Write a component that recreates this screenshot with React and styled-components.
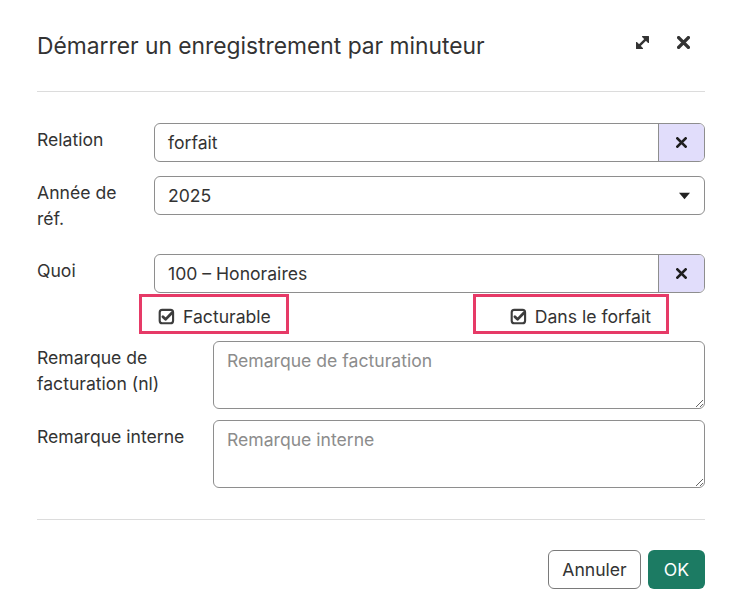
import React from 'react';
import styled, { createGlobalStyle } from 'styled-components';

const GlobalStyle = createGlobalStyle`
  body {
    margin: 0;
    background: #FFFFFF;
    font-family: Inter, "Noto Sans", sans-serif;
    color: #333333;
  }
`

const ExpandIcon = () => (
  <svg width="17" height="17" viewBox="0 0 16 16">
    <path d="M4.8 11.2 L11.2 4.8" stroke="#333" strokeWidth="2.3" strokeLinecap="round" />
    <path d="M8 2.4 H13.6 V8 Z" fill="#333" stroke="#333" strokeWidth="1" strokeLinejoin="round" />
    <path d="M2.4 8 V13.6 H8 Z" fill="#333" stroke="#333" strokeWidth="1" strokeLinejoin="round" />
  </svg>
);

const CrossIcon = ({ size = 13, weight = 3.2, color = '#333' }) => (
  <svg width={size} height={size} viewBox="0 0 12 12">
    <path d="M1.5 1.5 L10.5 10.5 M10.5 1.5 L1.5 10.5" stroke={color} strokeWidth={weight} strokeLinecap="round" />
  </svg>
);

const CheckSquare = () => (
  <svg width="17" height="17" viewBox="0 0 16 16">
    <rect x="1.6" y="1.8" width="12.6" height="12.6" rx="2.4" fill="none" stroke="#3d3d3d" strokeWidth="2" />
    <path d="M4.6 8.3 L7.1 10.7 L13.2 4.4" fill="none" stroke="#3d3d3d" strokeWidth="2.6" strokeLinecap="round" strokeLinejoin="round" />
  </svg>
);

const Caret = () => (
  <svg width="13" height="8" viewBox="0 0 12 8">
    <path d="M0.5 0.8 H11.5 L6 7.2 Z" fill="#222" />
  </svg>
);

class App extends React.Component {
  render() {
    return (
      <Dialog>
        <GlobalStyle />
        <Header>
          <Title>Démarrer un enregistrement par minuteur</Title>
          <Actions>
            <IconButton><ExpandIcon /></IconButton>
            <IconButton><CrossIcon /></IconButton>
          </Actions>
        </Header>
        <Body>
          <FieldRow labelWidth={117}>
            <Label>Relation</Label>
            <InputGroup>
              <Value>forfait</Value>
              <ClearButton><CrossIcon size={11} weight={3} color="#1f1f1f" /></ClearButton>
            </InputGroup>
          </FieldRow>
          <FieldRow labelWidth={117} top={14}>
            <Label>Année de réf.</Label>
            <InputGroup>
              <Value>2025</Value>
              <CaretBox><Caret /></CaretBox>
            </InputGroup>
          </FieldRow>
          <FieldRow labelWidth={117} top={14}>
            <Label>Quoi</Label>
            <InputGroup>
              <Value>100 – Honoraires</Value>
              <ClearButton><CrossIcon size={11} weight={3} color="#1f1f1f" /></ClearButton>
            </InputGroup>
          </FieldRow>
          <CheckRow>
            <Highlight padLeft={16}>
              <CheckSquare />
              <span>Facturable</span>
            </Highlight>
            <Highlight padLeft={34}>
              <CheckSquare />
              <span>Dans le forfait</span>
            </Highlight>
          </CheckRow>
          <FieldRow labelWidth={176} top={7}>
            <Label>Remarque de facturation (nl)</Label>
            <TextArea placeholder="Remarque de facturation" />
          </FieldRow>
          <FieldRow labelWidth={176} top={11}>
            <Label>Remarque interne</Label>
            <TextArea placeholder="Remarque interne" />
          </FieldRow>
        </Body>
        <Footer>
          <CancelButton>Annuler</CancelButton>
          <OkButton>OK</OkButton>
        </Footer>
      </Dialog>
    );
  }
}

const Dialog = styled.div`
  width: 742px;
  height: 605px;
  box-sizing: border-box;
  padding: 0 37px;
  background: #FFFFFF;
  display: flex;
  flex-direction: column;
`

const Header = styled.div`
  height: 92px;
  box-sizing: border-box;
  display: flex;
  align-items: center;
  justify-content: space-between;
  border-bottom: 1px solid #dcdcdc;
`

const Title = styled.h1`
  margin: 0;
  font-size: 22.8px;
  font-weight: 400;
  color: #333333;
`

const Actions = styled.div`
  display: flex;
  gap: 13px;
  margin-right: 8px;
  margin-top: -6px;
`

const IconButton = styled.button`
  width: 28px;
  height: 28px;
  padding: 0;
  border: none;
  background: transparent;
  display: flex;
  align-items: center;
  justify-content: center;
`

const Body = styled.div`
  padding: 31px 0 31px;
  border-bottom: 1px solid #dcdcdc;
`

const FieldRow = styled.div`
  display: grid;
  grid-template-columns: ${p => p.labelWidth}px 1fr;
  margin-top: ${p => p.top || 0}px;
  align-items: start;
`

const Label = styled.label`
  font-size: 17.6px;
  line-height: 26px;
  padding: 4px 8px 8px 0;
  color: #333333;
`

const InputGroup = styled.div`
  height: 39px;
  box-sizing: border-box;
  border: 1px solid #8e8e8e;
  border-radius: 6px;
  display: flex;
  align-items: stretch;
  overflow: hidden;
`

const Value = styled.div`
  flex: 1;
  display: flex;
  align-items: center;
  padding: 0 13px;
  font-size: 17.6px;
  color: #333333;
`

const ClearButton = styled.div`
  width: 45px;
  border-left: 1px solid #8e8e8e;
  background: #e1ddfb;
  display: flex;
  align-items: center;
  justify-content: center;
`

const CaretBox = styled.div`
  width: 40px;
  display: flex;
  align-items: center;
  justify-content: center;
`

const CheckRow = styled.div`
  display: flex;
  justify-content: space-between;
  padding: 0 36px 0 102px;
  margin-top: 1px;
`

const Highlight = styled.div`
  height: 40px;
  box-sizing: border-box;
  border: 3px solid #e63a67;
  display: flex;
  align-items: center;
  gap: 8px;
  padding: 5px 15px 0 ${p => p.padLeft}px;
  font-size: 17.6px;
  color: #333333;
`

const TextArea = styled.textarea`
  height: 68px;
  box-sizing: border-box;
  border: 1px solid #8e8e8e;
  border-radius: 6px;
  padding: 7px 13px;
  font-family: Inter, "Noto Sans", sans-serif;
  font-size: 17.6px;
  line-height: 24px;
  color: #333333;
  resize: vertical;
  outline: none;

  &::placeholder {
    color: #8c8c8c;
  }
`

const Footer = styled.div`
  display: flex;
  justify-content: flex-end;
  gap: 7px;
  padding-top: 30px;
`

const CancelButton = styled.button`
  height: 39px;
  width: 93px;
  padding: 0;
  border: 1px solid #7a7a7a;
  border-radius: 6px;
  background: #FFFFFF;
  font-family: Inter, "Noto Sans", sans-serif;
  font-size: 17.6px;
  color: #333333;
`

const OkButton = styled.button`
  height: 39px;
  width: 57px;
  padding: 0;
  border: none;
  border-radius: 6px;
  background: #1c7b63;
  font-family: Inter, "Noto Sans", sans-serif;
  font-size: 17.6px;
  color: #FFFFFF;
`

export default App;
